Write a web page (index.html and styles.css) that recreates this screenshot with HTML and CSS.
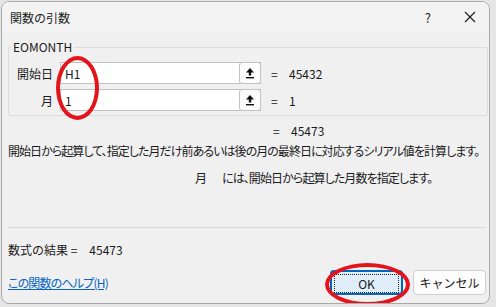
FILE: index.html
```html
<!DOCTYPE html>
<html lang="ja">
<head>
    <meta charset="UTF-8">
    <title>関数の引数</title>
    <link rel="stylesheet" href="styles.css">
</head>
<body>
    <div class="dialog">
        <div class="titleBar">
            <div class="titleText">関数の引数</div>
            <div class="titleButtons">
                <span class="helpBtn">?</span>
                <svg class="closeBtn" width="12" height="12" viewBox="0 0 12 12">
                    <path d="M1 1 L11 11 M11 1 L1 11" stroke="#1a1a1a" stroke-width="1.1" fill="none"/>
                </svg>
            </div>
        </div>

        <div class="content">
            <fieldset class="argGroup">
                <legend>EOMONTH</legend>
                <div class="argGrid">
                    <label class="argLabel">開始日</label>
                    <div class="argInput">
                        <span class="argText">H1</span>
                        <span class="refBtn">
                            <svg width="10" height="12" viewBox="0 0 10 12">
                                <path d="M5 1 L9 5.5 L6.2 5.5 L6.2 8.5 L3.8 8.5 L3.8 5.5 L1 5.5 Z" fill="#111"/>
                                <rect x="1" y="10" width="8" height="1.4" fill="#111"/>
                            </svg>
                        </span>
                    </div>
                    <div class="argValue"><span class="eq">=</span>45432</div>

                    <label class="argLabel">月</label>
                    <div class="argInput">
                        <span class="argText">1</span>
                        <span class="refBtn">
                            <svg width="10" height="12" viewBox="0 0 10 12">
                                <path d="M5 1 L9 5.5 L6.2 5.5 L6.2 8.5 L3.8 8.5 L3.8 5.5 L1 5.5 Z" fill="#111"/>
                                <rect x="1" y="10" width="8" height="1.4" fill="#111"/>
                            </svg>
                        </span>
                    </div>
                    <div class="argValue"><span class="eq">=</span>1</div>
                </div>
            </fieldset>

            <div class="totalRow"><span class="eq">=</span>45473</div>

            <div class="desc">開始日から起算して、指定した月だけ前あるいは後の月の最終日に対応するシリアル値を計算します。</div>
            <div class="argDesc"><span class="argName">月</span>には、開始日から起算した月数を指定します。</div>

            <div class="separator"></div>

            <div class="resultRow">数式の結果 =<span class="resultValue">45473</span></div>

            <div class="footer">
                <a class="helpLink" href="#">この関数のヘルプ(H)</a>
                <div class="buttons">
                    <button class="btn btnDefault"><span class="focusRing">OK</span></button>
                    <button class="btn">キャンセル</button>
                </div>
            </div>
        </div>

        <!-- red marks drawn over the screenshot -->
        <div class="mark markArgs"></div>
        <div class="mark markOk"></div>
    </div>
</body>
</html>
```

FILE: styles.css
```css
body {
    margin: 0;
    background: #e6e6e6;
    font-family: "Noto Sans CJK JP", "Noto Sans", sans-serif;
    font-size: 12px;
    color: #1a1a1a;
    width: 496px;
    height: 307px;
    overflow: hidden;
}
.dialog {
    position: relative;
    margin: 1px 0 0 1px;
    width: 487px;
    height: 301px;
    background: #f0f0f0;
    border: 1px solid #a9a9a9;
    border-radius: 8px;
    overflow: hidden;
}
.titleBar {
    height: 30px;
    background: #f3f3f3;
    display: flex;
    align-items: center;
    justify-content: space-between;
    padding: 0 0 0 8px;
}
.titleText {
    font-size: 12px;
    color: #1a1a1a;
}
.titleButtons {
    display: flex;
    align-items: center;
    gap: 33px;
    margin-right: 13px;
}
.helpBtn {
    font-size: 13px;
    color: #222;
}
.content {
    padding: 0 1px 0 6px;
}
.argGroup {
    margin: 7px 0 0 0;
    padding: 7px 0 4px 0;
    border: 1px solid #dcdcdc;
    border-radius: 2px;
    min-width: 0;
}
.argGroup legend {
    padding: 0 2px;
    margin-left: 2px;
    line-height: 16px;
    font-size: 12px;
}
.argGrid {
    display: grid;
    grid-template-columns: 44px 201px 1fr;
    column-gap: 7px;
    row-gap: 5px;
    align-items: center;
}
.argLabel {
    text-align: right;
    font-size: 12px;
}
.argInput {
    height: 20px;
    background: #fff;
    border: 1px solid #c3c3c3;
    display: flex;
    align-items: center;
    justify-content: space-between;
}
.argText {
    padding-left: 4px;
    font-size: 12px;
}
.refBtn {
    width: 20px;
    height: 20px;
    margin: -1px -1px 0 0;
    border: 1px solid #c3c3c3;
    border-radius: 3px;
    background: #fdfdfd;
    display: flex;
    align-items: center;
    justify-content: center;
}
.argValue {
    padding-left: 3px;
    font-size: 12px;
}
.eq {
    display: inline-block;
    width: 18px;
}
.totalRow {
    margin: 7px 0 0 265px;
    line-height: 16px;
}
.desc {
    margin-top: 4px;
    line-height: 16px;
    font-feature-settings: "palt";
    letter-spacing: -0.95px;
    white-space: nowrap;
}
.argDesc {
    margin-top: 11px;
    padding-left: 187px;
    line-height: 16px;
    font-feature-settings: "palt";
    letter-spacing: -0.9px;
}
.argName {
    display: inline-block;
    width: 27px;
}
.separator {
    margin: 41px 2px 0 0;
    border-top: 1px solid #dadada;
}
.resultRow {
    margin-top: 14px;
    line-height: 16px;
}
.resultValue {
    margin-left: 12px;
}
.footer {
    display: flex;
    justify-content: space-between;
    align-items: center;
    margin-top: 12px;
}
.helpLink {
    color: #0563c1;
    text-decoration: underline;
    font-feature-settings: "palt";
    letter-spacing: -0.8px;
}
.buttons {
    display: flex;
    gap: 10px;
    margin-right: 2px;
}
.btn {
    width: 73px;
    height: 25px;
    background: #fdfdfd;
    border: 1px solid #d0d0d0;
    border-radius: 4px;
    font-family: "Noto Sans CJK JP", "Noto Sans", sans-serif;
    font-size: 12px;
    color: #1a1a1a;
    padding: 0;
}
.btnDefault {
    background: #e0eef9;
    border: 2px solid #0067c0;
    padding: 2px;
}
.focusRing {
    display: flex;
    align-items: center;
    justify-content: center;
    height: 100%;
    border: 1px dotted #222;
}
.mark {
    position: absolute;
    border: 4px solid #e3141c;
    border-radius: 50%;
    box-sizing: border-box;
}
.markArgs {
    left: 54px;
    top: 54px;
    width: 43px;
    height: 64px;
}
.markOk {
    left: 323px;
    top: 261px;
    width: 85px;
    height: 43px;
}
```
